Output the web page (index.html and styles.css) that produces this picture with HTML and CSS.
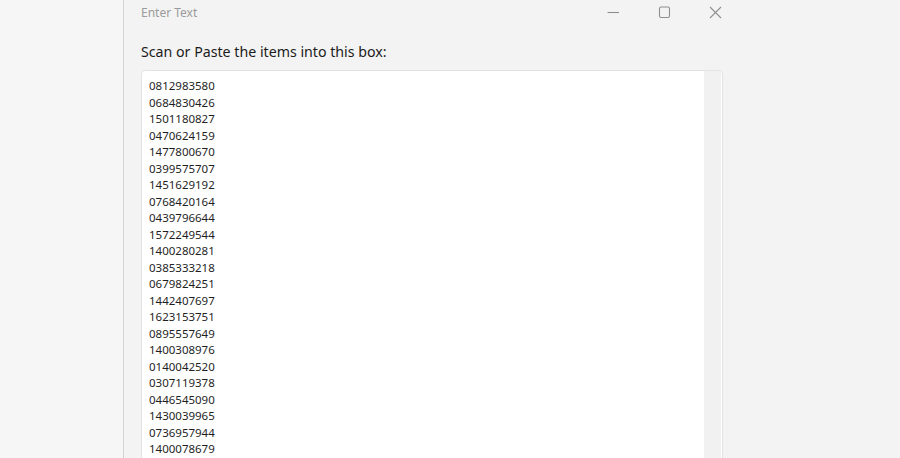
FILE: index.html
```html
<!DOCTYPE html>
<html>
<head>
<meta charset="utf-8">
<title>Enter Text</title>
<link rel="stylesheet" href="styles.css">
</head>
<body>
<div class="page">
  <div class="backdrop"></div>
  <div class="window">
    <div class="titlebar">
      <div class="title">Enter Text</div>
      <div class="controls">
        <div class="ctl">
          <svg width="13" height="13" viewBox="0 0 13 13"><path d="M0.5 6.5 H12" stroke="#8f8f8f" stroke-width="1.1" fill="none"/></svg>
        </div>
        <div class="ctl">
          <svg width="13" height="13" viewBox="0 0 13 13"><rect x="1.5" y="1" width="10" height="10.5" rx="1.6" stroke="#8f8f8f" stroke-width="1.1" fill="none"/></svg>
        </div>
        <div class="ctl">
          <svg width="13" height="13" viewBox="0 0 13 13"><path d="M1 1 L12 12 M12 1 L1 12" stroke="#8f8f8f" stroke-width="1.1" fill="none"/></svg>
        </div>
      </div>
    </div>
    <div class="label">Scan or Paste the items into this box:</div>
    <div class="textbox">
      <div class="content">
        <div class="line">0812983580</div>
        <div class="line">0684830426</div>
        <div class="line">1501180827</div>
        <div class="line">0470624159</div>
        <div class="line">1477800670</div>
        <div class="line">0399575707</div>
        <div class="line">1451629192</div>
        <div class="line">0768420164</div>
        <div class="line">0439796644</div>
        <div class="line">1572249544</div>
        <div class="line">1400280281</div>
        <div class="line">0385333218</div>
        <div class="line">0679824251</div>
        <div class="line">1442407697</div>
        <div class="line">1623153751</div>
        <div class="line">0895557649</div>
        <div class="line">1400308976</div>
        <div class="line">0140042520</div>
        <div class="line">0307119378</div>
        <div class="line">0446545090</div>
        <div class="line">1430039965</div>
        <div class="line">0736957944</div>
        <div class="line">1400078679</div>
      </div>
      <div class="scrollbar"></div>
    </div>
  </div>
</div>
</body>
</html>
```
FILE: styles.css
```css
html, body {
  margin: 0;
  padding: 0;
  height: 100%;
  overflow: hidden;
  background: #f3f3f3;
  font-family: "Noto Sans", "Open Sans", sans-serif;
}
.page {
  display: flex;
  height: 458px;
  overflow: hidden;
}
.backdrop {
  width: 123px;
  flex: none;
  background: #f6f6f6;
  border-right: 1px solid #d4d4d4;
}
.window {
  flex: 1;
  background: #f3f3f3;
  padding-left: 17px;
  display: flex;
  flex-direction: column;
}
.titlebar {
  height: 24px;
  width: 600px;
  display: flex;
  align-items: center;
}
.title {
  font-size: 12px;
  color: #9b9b9b;
}
.controls {
  margin-left: auto;
  display: flex;
  height: 24px;
}
.ctl {
  width: 51px;
  display: flex;
  align-items: center;
  justify-content: center;
}
.label {
  margin-top: 18px;
  font-size: 14.2px;
  line-height: 20px;
  color: #1b1b1b;
}
.textbox {
  margin-top: 8px;
  width: 580px;
  height: 400px;
  background: #ffffff;
  border: 1px solid #e3e3e3;
  border-radius: 4px;
  display: flex;
  flex: none;
}
.content {
  flex: 1;
  padding: 7px 0 0 7px;
  font-size: 11.5px;
  line-height: 16.5px;
  color: #1f1f1f;
}
.scrollbar {
  width: 17px;
  margin-right: 1px;
  background: #f1f1f1;
}
```
